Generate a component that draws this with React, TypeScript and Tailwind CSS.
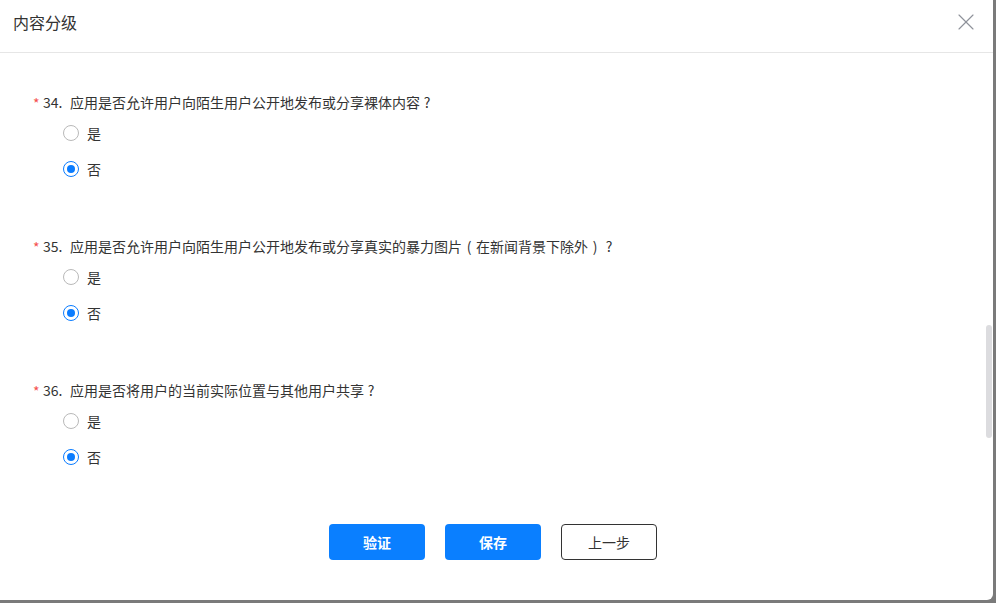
import { X } from 'lucide-react'
import type { ReactNode } from 'react'

// full-width punctuation drawn centred in its box, as the original font does
function P({ children }: { children: ReactNode }) {
    return <span className="inline-block w-[1em] text-center">{children}</span>
}

const questions: { no: number, text: ReactNode }[] = [
    { no: 34, text: <>应用是否允许用户向陌生用户公开地发布或分享裸体内容<P>?</P></> },
    { no: 35, text: <>应用是否允许用户向陌生用户公开地发布或分享真实的暴力图片<P>(</P>在新闻背景下除外<P>)</P><P>?</P></> },
    { no: 36, text: <>应用是否将用户的当前实际位置与其他用户共享<P>?</P></> },
]

function Radio({ label, checked }: { label: string, checked: boolean }) {
    return (
        <label className="h-[36px] flex items-center gap-[8px] cursor-pointer">
            <span
                className={`w-[16px] h-[16px] rounded-full border flex items-center justify-center bg-white ${checked ? 'border-[#0a7cff]' : 'border-[#b9b9b9]'}`}
            >
                {checked && <span className="w-[8px] h-[8px] rounded-full bg-[#0a7cff]" />}
            </span>
            <span className="text-[14px] text-[#333]">{label}</span>
        </label>
    )
}

function Question({ no, text }: { no: number, text: ReactNode }) {
    return (
        <div className="mb-[49px]">
            <div className="h-[20px] flex items-center text-[14px] text-[#333] leading-[20px] whitespace-nowrap">
                <span className="text-[#f5504e] w-[10px] translate-y-[1px]">*</span>
                <span className="w-[27px]">{no}.</span>
                <span>{text}</span>
            </div>
            <div className="mt-[3px] pl-[30px]">
                <Radio label="是" checked={false} />
                <Radio label="否" checked />
            </div>
        </div>
    )
}

export default function App() {
    return (
        <div
            className="w-[996px] h-[603px] bg-[#7a7a7a] overflow-hidden"
            style={{ fontFamily: '"Noto Sans CJK SC", "Liberation Sans", sans-serif' }}
        >
            <div className="w-[993px] h-[600px] bg-white rounded-br-[6px] flex flex-col relative">
                <div className="h-[53px] border-b border-[#e6e6e6] flex items-center justify-between pl-[13px] pr-[13px]">
                    <h3 className="text-[16px] text-[#333] font-normal -mt-[9px]">内容分级</h3>
                    <X className="w-[28px] h-[28px] text-[#8f929a] -mt-[9px]" strokeWidth={1} />
                </div>
                <div className="flex-1 pt-[39px] pl-[33px]">
                    {questions.map((q) => (
                        <Question key={q.no} no={q.no} text={q.text} />
                    ))}
                    <div className="flex justify-center gap-[20px] pr-[40px] mt-[3px]">
                        <button className="w-[96px] h-[36px] rounded-[4px] bg-[#0a7fff] text-white text-[14px] font-bold">验证</button>
                        <button className="w-[96px] h-[36px] rounded-[4px] bg-[#0a7fff] text-white text-[14px] font-bold">保存</button>
                        <button className="w-[96px] h-[36px] rounded-[4px] border border-[#333] bg-white text-[#333] text-[14px]">上一步</button>
                    </div>
                </div>
                <div className="absolute right-[1px] top-[325px] w-[6px] h-[113px] rounded-full bg-[#dcdcdf]" />
            </div>
        </div>
    )
}
